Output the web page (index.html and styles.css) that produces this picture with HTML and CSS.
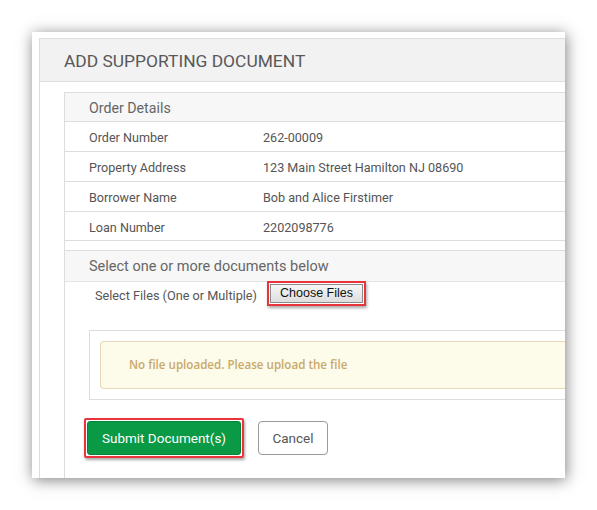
FILE: index.html
```html
<!DOCTYPE html>
<html>
<head>
<meta charset="utf-8">
<link rel="stylesheet" href="styles.css">
</head>
<body>
<div class="card">
  <div class="modal">
    <div class="modal-head">ADD SUPPORTING DOCUMENT</div>
    <div class="modal-body">
      <div class="column">
        <div class="panel">
          <div class="panel-head">Order Details</div>
          <div class="row"><span class="label">Order Number</span><span class="value">262-00009</span></div>
          <div class="row"><span class="label">Property Address</span><span class="value">123 Main Street Hamilton NJ 08690</span></div>
          <div class="row"><span class="label">Borrower Name</span><span class="value">Bob and Alice Firstimer</span></div>
          <div class="row"><span class="label">Loan Number</span><span class="value">2202098776</span></div>
        </div>
        <div class="panel panel-docs">
          <div class="panel-head panel-head-lg">Select one or more documents below</div>
          <div class="file-row">
            <span class="file-label">Select Files (One or Multiple)</span>
            <span class="hl hl-file"><span class="file-btn">Choose Files</span></span>
          </div>
          <div class="upload-box">
            <div class="alert">No file uploaded. Please upload the file</div>
          </div>
        </div>
        <div class="actions">
          <span class="hl hl-submit"><span class="btn-submit">Submit Document(s)</span></span>
          <span class="btn-cancel">Cancel</span>
        </div>
      </div>
    </div>
  </div>
</div>
</body>
</html>
```

FILE: styles.css
```css
html, body {
  margin: 0;
  padding: 0;
  background: #ffffff;
}
body {
  font-family: Roboto, "Liberation Sans", Arial, sans-serif;
  width: 597px;
  height: 510px;
  overflow: hidden;
}
.card {
  margin: 32px 0 0 32px;
  width: 533px;
  height: 446px;
  background: #ffffff;
  box-shadow: 1px 2px 14px rgba(0, 0, 0, 0.5);
  overflow: hidden;
  padding: 6px 0 0 7px;
  box-sizing: border-box;
}
.modal {
  width: 620px;
  height: 500px;
  border-top: 1px solid #dddddd;
  border-left: 1px solid #dddddd;
}
.modal-head {
  height: 42px;
  background: #f2f2f2;
  border-bottom: 1px solid #dddddd;
  padding-left: 24px;
  font-size: 17.4px;
  line-height: 44px;
  color: #585858;
}
.modal-body {
  padding: 10px 0 0 24px;
}
.column {
  border-left: 1px solid #dddddd;
  height: 420px;
}
.panel {
  border-top: 1px solid #dddddd;
  border-bottom: 1px solid #dddddd;
}
.panel-head {
  height: 28px;
  line-height: 31px;
  background: #f7f7f7;
  padding-left: 24px;
  font-size: 14.2px;
  color: #666666;
}
.row {
  display: flex;
  height: 29px;
  line-height: 31px;
  border-top: 1px solid #dddddd;
  font-size: 12.6px;
  color: #555555;
}
.row:last-child {
  height: 28px;
}
.label {
  width: 174px;
  padding-left: 24px;
}
.panel-docs {
  margin-top: 9px;
  border-bottom: none;
}
.panel-head-lg {
  height: 30px;
  line-height: 31px;
  font-size: 14.5px;
  border-bottom: 1px solid #e4e4e4;
}
.file-row {
  display: flex;
  align-items: center;
  gap: 10px;
  padding: 0 0 0 30px;
  height: 27px;
}
.file-label {
  font-size: 12.7px;
  color: #555555;
}
.hl {
  display: inline-block;
  border: 2px solid #e8343a;
  box-shadow: 1px 2px 3px rgba(0, 0, 0, 0.35);
}
.hl-file {
  padding: 1px;
  background: #ffffff;
  margin-bottom: 4px;
}
.file-btn {
  display: block;
  padding: 0 9px;
  height: 17px;
  line-height: 17px;
  font-family: "Liberation Sans", Arial, sans-serif;
  font-size: 12.5px;
  color: #111111;
  background: linear-gradient(#f6f6f6, #dedede);
  border: 1px solid #8a8a8a;
}
.upload-box {
  margin: 21px 0 0 24px;
  border-top: 1px solid #dddddd;
  border-left: 1px solid #dddddd;
  border-bottom: 1px solid #dddddd;
  padding: 10px 0 10px 10px;
}
.alert {
  height: 46px;
  line-height: 46px;
  background: #fdfbea;
  border: 1px solid #e6d8b6;
  border-right: none;
  border-radius: 4px 0 0 4px;
  padding-left: 28px;
  font-family: "Open Sans", "Liberation Sans", sans-serif;
  font-weight: 600;
  font-size: 11.6px;
  color: #c8a96a;
}
.actions {
  display: flex;
  align-items: center;
  gap: 14px;
  padding: 18px 0 0 19px;
}
.hl-submit {
  padding: 1px;
  border-width: 2px;
  border-radius: 2px;
}
.btn-submit {
  display: block;
  width: 152px;
  height: 32px;
  line-height: 33px;
  text-align: center;
  background: #0a9944;
  border: 1px solid #07843a;
  border-radius: 3px;
  color: #ffffff;
  font-size: 13.5px;
}
.btn-cancel {
  display: block;
  width: 68px;
  height: 32px;
  line-height: 33px;
  text-align: center;
  border: 1px solid #9a9a9a;
  border-radius: 4px;
  color: #555555;
  font-size: 13.5px;
  background: #ffffff;
}
```
